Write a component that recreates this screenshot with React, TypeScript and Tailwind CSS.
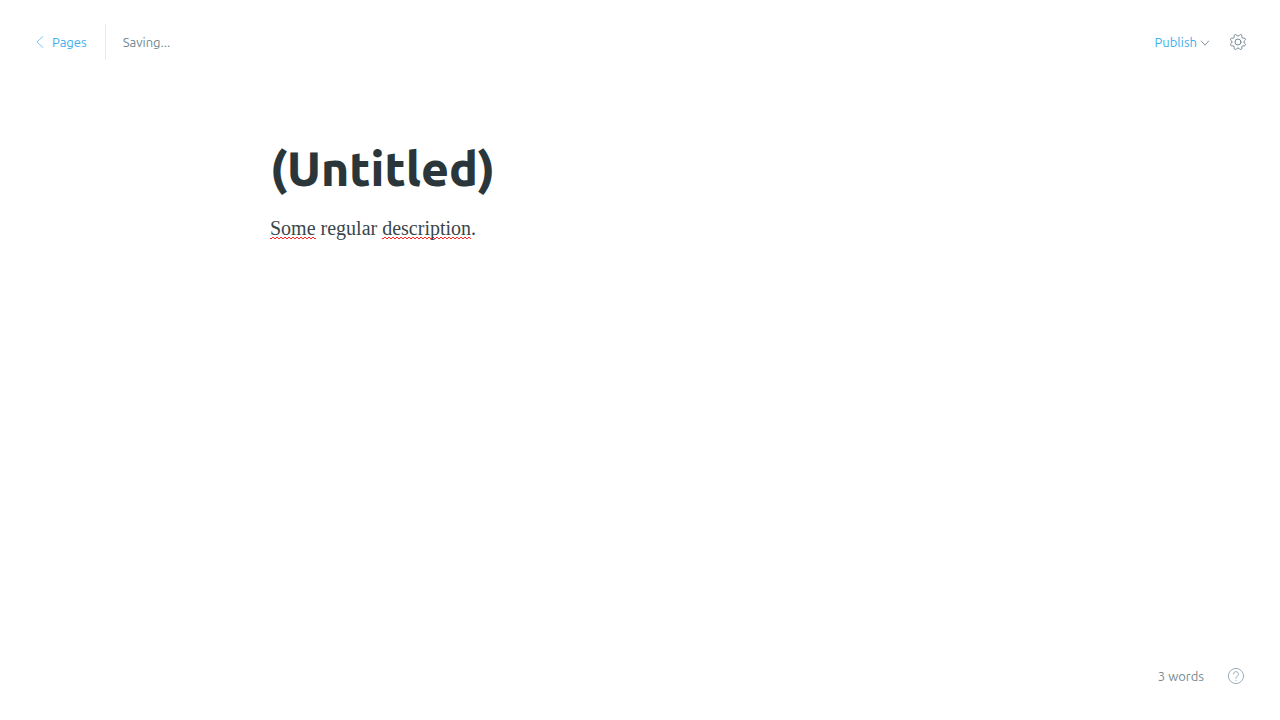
import { useState } from "react";

function BackIcon() {
  return (
    <svg className="h-3 w-2 text-[#7cc9f3]" viewBox="0 0 8 12" fill="none" stroke="currentColor" strokeLinecap="round" strokeLinejoin="round" aria-hidden="true">
      <path d="M7 0.5 0.9 6 7 11.5" />
    </svg>
  );
}

function ChevronDownIcon() {
  return (
    <svg className="mt-0.5 h-2 w-2 text-[#738a94]" viewBox="0 0 8 8" fill="none" stroke="currentColor" strokeWidth="0.9" strokeLinecap="round" strokeLinejoin="round" overflow="visible" aria-hidden="true">
      <path d="M0.3 2 4 6.200l3.700-4.200" />
    </svg>
  );
}

function GearIcon() {
  return (
    <svg className="h-4 w-4 text-[#738a94]" viewBox="0 0 24 24" fill="none" stroke="currentColor" strokeWidth="1.5" strokeLinecap="round" strokeLinejoin="round" overflow="visible" aria-hidden="true">
      <path d="M10.546 2.438a1.957 1.957 0 0 0 2.908 0L14.4 1.4a1.959 1.959 0 0 1 3.41 1.413l-.071 1.4a1.958 1.958 0 0 0 2.051 2.054l1.4-.071a1.959 1.959 0 0 1 1.41 3.41l-1.042.94a1.96 1.96 0 0 0 0 2.909l1.042.94a1.959 1.959 0 0 1-1.413 3.41l-1.4-.071a1.958 1.958 0 0 0-2.056 2.056l.071 1.4A1.959 1.959 0 0 1 14.4 22.6l-.941-1.041a1.959 1.959 0 0 0-2.908 0L9.606 22.6A1.959 1.959 0 0 1 6.2 21.192l.072-1.4a1.958 1.958 0 0 0-2.056-2.056l-1.4.071A1.958 1.958 0 0 1 1.4 14.4l1.041-.94a1.96 1.96 0 0 0 0-2.909L1.4 9.606A1.958 1.958 0 0 1 2.809 6.2l1.4.071a1.958 1.958 0 0 0 2.058-2.06L6.2 2.81A1.959 1.959 0 0 1 9.606 1.4z" />
      <circle cx="12" cy="12" r="4.5" />
    </svg>
  );
}

function HelpIcon() {
  return (
    <svg className="h-4 w-4 text-[#9bb0ba]" viewBox="0 0 16 16" fill="none" stroke="currentColor" strokeLinecap="round" strokeLinejoin="round" overflow="visible" aria-hidden="true">
      <circle cx="8" cy="8" r="7.6" />
      <path d="M5.5 6.100a2.500 2.500 0 1 1 3.500 2.300C8.200 8.800 8 9.100 8 9.800v.5" />
      <circle cx="8" cy="12.300" r="0.600" fill="currentColor" stroke="none" />
    </svg>
  );
}

const misspelled =
  "bg-[linear-gradient(135deg,transparent_40%,#ff2424_40%,#ff2424_65%,transparent_65%),linear-gradient(45deg,transparent_40%,#ff2424_40%,#ff2424_65%,transparent_65%)] bg-[length:4px_2px] bg-repeat-x bg-[position:0_100%,2px_100%]";

export default function App() {
  const [title, setTitle] = useState("(Untitled)");

  return (
    <div className="flex min-h-screen flex-col bg-white font-['Ubuntu','Noto_Sans',sans-serif] text-[13px] leading-5 text-[#738a94]">
      <header className="flex items-center justify-between py-6 pr-[34px] pl-9">
        <div className="flex h-9 items-center">
          <a href="#pages" className="flex items-center gap-2 pr-[18px] text-[#3eb0ef]">
            <BackIcon />
            Pages
          </a>
          <span className="flex h-9 items-center border-l border-[#e3ecf2] pl-[17px]">Saving...</span>
        </div>
        <div className="flex items-center gap-[21px]">
          <button type="button" className="flex items-center gap-1 text-[#3eb0ef]">
            Publish
            <ChevronDownIcon />
          </button>
          <button type="button" aria-label="Settings">
            <GearIcon />
          </button>
        </div>
      </header>

      <main className="mx-auto w-full max-w-[740px] flex-1 pt-[54px]">
        <input
          aria-label="Page title"
          value={title}
          onChange={(event) => setTitle(event.target.value)}
          spellCheck={false}
          className="block h-[60px] w-full bg-transparent text-5xl font-extrabold text-[#2b363b] outline-none"
        />
        <div
          role="textbox"
          aria-label="Page content"
          contentEditable
          suppressContentEditableWarning
          spellCheck={false}
          className="mt-[14px] font-['Liberation_Serif',serif] text-xl leading-8 text-[#3a464c] outline-none"
        >
          <p>
            <span className={misspelled}>Some</span> regular <span className={misspelled}>description</span>.
          </p>
        </div>
      </main>

      <footer className="flex items-center justify-end gap-6 pr-9 pb-[34px]">
        <span>3 words</span>
        <button type="button" aria-label="Help">
          <HelpIcon />
        </button>
      </footer>
    </div>
  );
}
